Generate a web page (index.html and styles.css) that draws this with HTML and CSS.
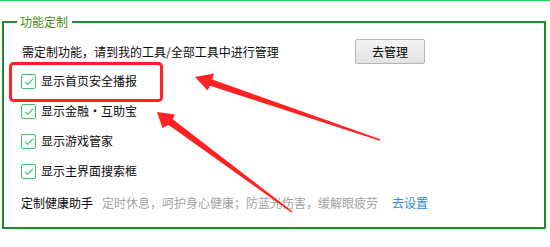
FILE: index.html
```html
<!DOCTYPE html>
<html lang="zh-CN">
<head>
<meta charset="utf-8">
<title>功能定制</title>
<link rel="stylesheet" href="styles.css">
</head>
<body>
<div class="page">
  <div class="topline"></div>
  <fieldset class="panel">
    <legend class="title">功能定制</legend>
    <div class="row-manage">
      <span class="hint">需定制功能，请到我的工具/全部工具中进行管理</span>
      <button class="btn" type="button">去管理</button>
    </div>
    <div class="opts">
      <label class="opt"><span class="check"><svg viewBox="0 0 15 15" width="15" height="15"><path d="M4 7.8 L6.6 10.5 L12 4.8" fill="none" stroke="#4cc276" stroke-width="1.2"/></svg></span><span>显示首页安全播报</span></label>
      <label class="opt"><span class="check"><svg viewBox="0 0 15 15" width="15" height="15"><path d="M4 7.8 L6.6 10.5 L12 4.8" fill="none" stroke="#4cc276" stroke-width="1.2"/></svg></span><span>显示金融・互助宝</span></label>
      <label class="opt"><span class="check"><svg viewBox="0 0 15 15" width="15" height="15"><path d="M4 7.8 L6.6 10.5 L12 4.8" fill="none" stroke="#4cc276" stroke-width="1.2"/></svg></span><span>显示游戏管家</span></label>
      <label class="opt"><span class="check"><svg viewBox="0 0 15 15" width="15" height="15"><path d="M4 7.8 L6.6 10.5 L12 4.8" fill="none" stroke="#4cc276" stroke-width="1.2"/></svg></span><span>显示主界面搜索框</span></label>
    </div>
    <div class="health">
      <span class="health-title">定制健康助手</span>
      <span class="health-desc">定时休息，呵护身心健康；防蓝光伤害，缓解眼疲劳</span>
      <a class="health-link" href="#">去设置</a>
    </div>
  </fieldset>
  <svg class="annot" viewBox="0 0 550 247" width="550" height="247">
    <rect x="10.5" y="63.5" width="151" height="37" rx="3" ry="3" fill="none" stroke="#ff2222" stroke-width="3"/>
    <polygon fill="#ff2222" points="195,77 214,73.5 212.2,79.4 380.3,139.2 379.7,140.8 210,85.8 207.5,90.5"/>
    <polygon fill="#ff2222" points="157,112 175,114.5 172.8,119.3 292.5,211.4 291.5,212.6 168.6,124.9 162.5,128"/>
  </svg>
</div>
</body>
</html>
```

FILE: styles.css
```css
html, body {
  margin: 0;
  padding: 0;
  background: #ffffff;
}

.page {
  position: relative;
  width: 550px;
  height: 247px;
  overflow: hidden;
  font-family: "Noto Sans CJK SC", "Microsoft YaHei", "Noto Sans", sans-serif;
  font-size: 12px;
  line-height: 16px;
  color: #0a0a0a;
}

.topline {
  height: 1px;
  background: #27d05e;
}

.panel {
  margin: 13px 4px 0 2px;
  border: 2px solid #1b8c2e;
  padding: 9px 0 9px 17px;
  min-width: 0;
}

.title {
  margin-left: -4px;
  padding: 0 4px 0 3px;
  font-size: 12px;
  line-height: 16px;
  color: #4b8c16;
}

.row-manage {
  display: grid;
  grid-template-columns: 334px 70px;
  align-items: center;
  height: 25px;
}

.hint {
  padding-left: 1px;
  white-space: nowrap;
}

.btn {
  box-sizing: border-box;
  width: 70px;
  height: 25px;
  padding: 0;
  border: 1px solid #b4b4b4;
  border-radius: 2px;
  background: linear-gradient(#f4f4f4, #e2e2e2);
  font-family: inherit;
  font-size: 12px;
  line-height: 16px;
  color: #000000;
}

.opts {
  margin-top: 2px;
  display: flex;
  flex-direction: column;
}

.opt {
  height: 30px;
  display: flex;
  align-items: center;
  gap: 5px;
}

.check {
  box-sizing: border-box;
  width: 15px;
  height: 15px;
  border: 1px solid #3cc46a;
  border-radius: 2px;
  background: #ffffff;
  display: flex;
}

.check svg {
  display: block;
  margin: -1px;
}

.health {
  margin-top: 2px;
  height: 30px;
  display: flex;
  align-items: center;
  white-space: nowrap;
}

.health-desc {
  margin-left: 9px;
  color: #a3a3a3;
}

.health-link {
  margin-left: 14px;
  color: #2b89dc;
  text-decoration: none;
}

.annot {
  position: absolute;
  top: 0;
  left: 0;
  pointer-events: none;
}
```
